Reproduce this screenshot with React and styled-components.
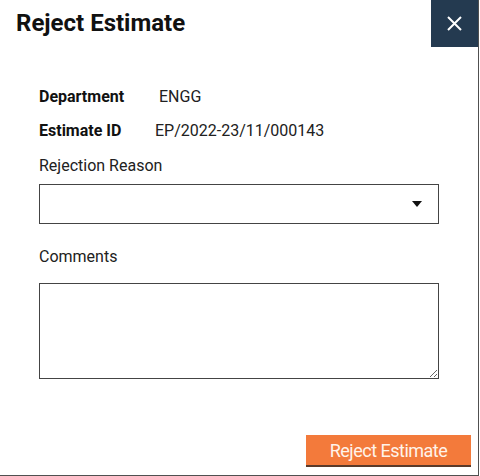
import React from "react";
import styled, { createGlobalStyle } from "styled-components";

const Global = createGlobalStyle`
  html, body { margin: 0; padding: 0; background: #fff; }
  body { font-family: Roboto, "Liberation Sans", sans-serif; color: #212121; }
  * { box-sizing: border-box; }
`;

const Dialog = styled.div`
  width: 479px;
  height: 476px;
  background: #fff;
  border-right: 1px solid #505050;
  border-bottom: 1px solid #505050;
  display: flex;
  flex-direction: column;
`;

const Header = styled.div`
  display: flex;
  align-items: flex-start;
  justify-content: space-between;
  height: 47px;
  margin-right: -1px;
`;

const Title = styled.h1`
  margin: 0;
  padding: 8px 0 0 16px;
  font-size: 24px;
  font-weight: 700;
  color: #111;
  line-height: 30px;
`;

const CloseButton = styled.button`
  width: 47px;
  height: 47px;
  border: none;
  background: #243a50;
  display: flex;
  align-items: center;
  justify-content: center;
  padding: 0;
  margin-right: 1px;
  cursor: pointer;
`;

const Body = styled.div`
  padding: 41px 40px 0 39px;
  display: flex;
  flex-direction: column;
  flex: 1;
`;

const InfoRow = styled.div`
  display: flex;
  align-items: baseline;
  height: 34px;
  line-height: 18px;
  font-size: 16px;
`;

const InfoLabel = styled.span`
  font-weight: 700;
  width: ${(p) => p.$w}px;
  color: #111;
`;

const InfoValue = styled.span`
  font-weight: 400;
  color: #212121;
`;

const FieldLabel = styled.label`
  font-size: 16px;
  line-height: 20px;
  color: #212121;
  margin-top: ${(p) => p.$mt || 0}px;
`;

const SelectBox = styled.div`
  margin-top: 8px;
  width: 400px;
  height: 40px;
  border: 1px solid #444;
  display: flex;
  align-items: center;
  justify-content: flex-end;
  padding-right: 16px;
`;

const TextArea = styled.textarea`
  margin-top: 16px;
  width: 400px;
  height: 96px;
  border: 1px solid #444;
  border-radius: 0;
  resize: both;
  font-family: inherit;
  padding: 4px;
  outline: none;
`;

const Footer = styled.div`
  display: flex;
  justify-content: flex-end;
  margin-top: auto;
  padding: 0 7px 8px 0;
`;

const PrimaryButton = styled.button`
  width: 165px;
  height: 32px;
  background: #f37a3b;
  color: #fff3ea;
  border: none;
  border-bottom: 2px solid #5a3a2a;
  font-family: Roboto, sans-serif;
  font-size: 18px;
  letter-spacing: -0.5px;
  padding: 0;
  cursor: pointer;
`;

export default function App() {
  return (
    <>
      <Global />
      <Dialog>
        <Header>
          <Title>Reject Estimate</Title>
          <CloseButton aria-label="Close">
            <svg width="15" height="15" viewBox="0 0 15 15">
              <path d="M1 1 L14 14 M14 1 L1 14" stroke="#fff" strokeWidth="2" />
            </svg>
          </CloseButton>
        </Header>
        <Body>
          <InfoRow>
            <InfoLabel $w={120}>Department</InfoLabel>
            <InfoValue>ENGG</InfoValue>
          </InfoRow>
          <InfoRow>
            <InfoLabel $w={116}>Estimate ID</InfoLabel>
            <InfoValue>EP/2022-23/11/000143</InfoValue>
          </InfoRow>
          <FieldLabel>Rejection Reason</FieldLabel>
          <SelectBox>
            <svg width="10" height="6" viewBox="0 0 10 6">
              <path d="M0 0 H10 L5 6 Z" fill="#111" />
            </svg>
          </SelectBox>
          <FieldLabel $mt={23}>Comments</FieldLabel>
          <TextArea />
        </Body>
        <Footer>
          <PrimaryButton>Reject Estimate</PrimaryButton>
        </Footer>
      </Dialog>
    </>
  );
}
